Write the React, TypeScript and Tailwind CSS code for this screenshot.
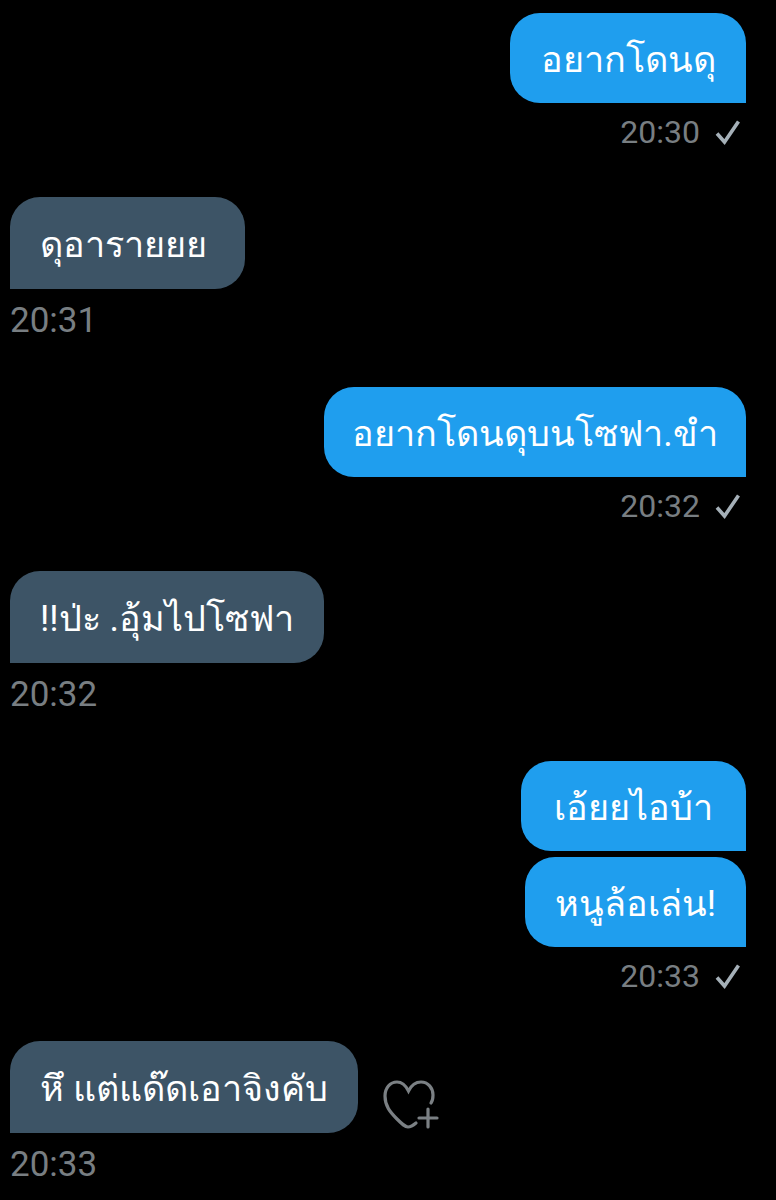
import React from 'react';

const thaiFont = "font-['Roboto','Noto_Sans','DejaVu_Sans',sans-serif]";

// one sent bubble, square at the bottom right corner
const Sent = ({ text, width }: { text: string; width: string }) => (
    <div className={`${width} h-[90px] bg-[#1f9eee] rounded-t-[30px] rounded-bl-[30px] flex items-center justify-center pt-[3px] text-white text-[36px] leading-none`}>
        <span>{text}</span>
    </div>
);

const SentTime = ({ time }: { time: string }) => (
    <div className="flex items-center h-[56px] pt-[2px] text-[32px] leading-none text-[#787e82]">
        <span>{time}</span>
        <svg className="ml-[15px] mr-[5px]" width="26" height="26" viewBox="0 0 26 26" fill="none" stroke="#a5b0b8" strokeWidth="3.6">
            <path d="M2 14.5 L9.5 23 L23.5 2.5" />
        </svg>
    </div>
);

const Received = ({ text, width, time }: { text: string; width: string; time: string }) => (
    <div className="flex flex-col items-start">
        <div className={`${width} h-[92px] bg-[#3d5466] rounded-t-[30px] rounded-br-[30px] flex items-center pl-[30px] pt-[3px] text-white text-[36px] leading-none`}>
            <span>{text}</span>
        </div>
        <div className="h-[62px] flex items-center text-[35px] leading-none text-[#787e82]">{time}</div>
    </div>
);

const HeartPlus = () => (
    <svg width="56" height="50" viewBox="0 0 56 50" fill="none" stroke="#7b8084" strokeWidth="3.2" strokeLinecap="round">
        <path d="M33 43 C30 45.5 27 47 25 47 C22 47 19 44 14 39 C7 32 2 26 2 16 C2 8 7 2 14 2 C19 2 23 6 25.5 11 C28 6 32 2 38 2 C45 2 50 8 50 15 C50 18 49.5 21 48 23" />
        <path d="M36 38 H54 M45 29 V47" />
    </svg>
);

export default function App() {
    return (
        <div className={`w-[776px] h-[1200px] overflow-hidden bg-black flex flex-col pt-[13px] pl-[10px] pr-[30px] ${thaiFont}`}>
            <div className="flex flex-col items-end h-[184px]">
                <Sent text="อยากโดนดุ" width="w-[236px]" />
                <SentTime time="20:30" />
            </div>
            <div className="h-[190px]">
                <Received text="ดุอารายยย" width="w-[235px]" time="20:31" />
            </div>
            <div className="flex flex-col items-end h-[184px]">
                <Sent text="อยากโดนดุบนโซฟา.ขำ" width="w-[422px]" />
                <SentTime time="20:32" />
            </div>
            <div className="h-[190px]">
                <Received text="!!ป่ะ .อุ้มไปโซฟา" width="w-[314px]" time="20:32" />
            </div>
            <div className="flex flex-col items-end gap-[6px] h-[280px]">
                <Sent text="เอ้ยยไอบ้า" width="w-[225px]" />
                <div className="flex flex-col items-end">
                    <Sent text="หนูล้อเล่น!" width="w-[221px]" />
                    <SentTime time="20:33" />
                </div>
            </div>
            <div className="flex items-start gap-[25px]">
                <Received text="หึ แต่แด๊ดเอาจิงคับ" width="w-[348px]" time="20:33" />
                <div className="mt-[39px]">
                    <HeartPlus />
                </div>
            </div>
        </div>
    );
}
